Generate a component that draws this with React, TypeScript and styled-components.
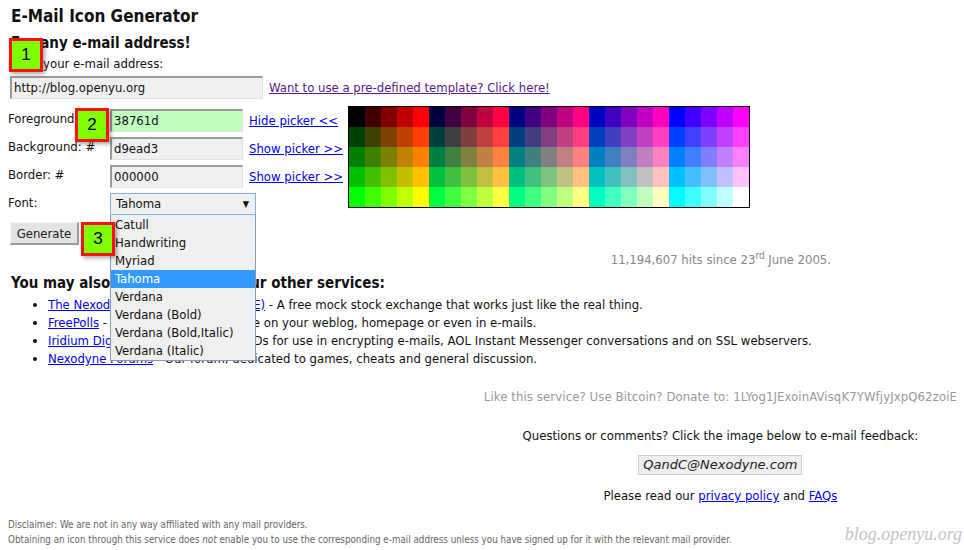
import React from "react";
import styled, { createGlobalStyle } from "styled-components";

const FONT = `"DejaVu Sans Condensed", "DejaVu Sans", sans-serif`;

const GlobalStyle = createGlobalStyle`
  html, body { margin: 0; padding: 0; background: #fff; }
  body { font-family: ${FONT}; font-size: 13px; color: #111; }
  * { box-sizing: border-box; }
`;

const Page = styled.div`
  position: relative;
  width: 964px;
  height: 550px;
  overflow: hidden;
  padding: 6px 7px 0 8px;
  display: flex;
  flex-direction: column;
`;

const Title = styled.h1`
  margin: 0 0 0 3px;
  font-size: 17px;
  line-height: 20px;
  font-weight: bold;
`;

const SubTitle = styled.h2<{ $top?: number }>`
  margin: ${(p) => p.$top ?? 7}px 0 0 3px;
  font-size: 15px;
  line-height: 20px;
  font-weight: bold;
`;

const Text = styled.div<{ $top?: number }>`
  margin-top: ${(p) => p.$top ?? 0}px;
  line-height: 18px;
`;

const Row = styled.div<{ $top?: number }>`
  display: flex;
  align-items: center;
  gap: 6px;
  margin: ${(p) => p.$top ?? 0}px 0 0 2px;
`;

const TextInput = styled.div<{ $w: number; $bg?: string }>`
  width: ${(p) => p.$w}px;
  height: 23px;
  line-height: 19px;
  padding: 0 2px;
  background: ${(p) => p.$bg ?? "#f0f0f0"};
  border-style: solid;
  border-width: 2px 1px 1px 2px;
  border-color: #9a9a9a #e2e2e2 #e2e2e2 #9a9a9a;
  font-size: 13px;
  color: #111;
  white-space: nowrap;
  overflow: hidden;
`;

const Link = styled.a<{ $visited?: boolean }>`
  color: ${(p) => (p.$visited ? "#551a8b" : "#0000ee")};
  text-decoration: underline;
  white-space: nowrap;
  cursor: pointer;
`;

const FormArea = styled.div`
  display: flex;
  align-items: flex-start;
  margin-top: 7px;
`;

const FormGrid = styled.div`
  display: grid;
  grid-template-columns: 102px 139px 99px;
  grid-auto-rows: 28px;
  align-items: center;
`;

const Label = styled.div`
  white-space: nowrap;
  line-height: 18px;
  margin-top: -2px;
`;

const SelectCell = styled.div`
  position: relative;
  grid-column: 2 / span 2;
  width: 146px;
`;

const SelectBox = styled.div`
  height: 22px;
  width: 146px;
  border: 1px solid #7eb4ea;
  background: #f0f0f0;
  display: flex;
  align-items: center;
  justify-content: space-between;
  padding: 0 6px 0 5px;
  line-height: 18px;
`;

const Arrow = styled.span`
  font-size: 9px;
  color: #111;
`;

const DropList = styled.ul`
  position: absolute;
  top: 100%;
  left: 0;
  width: 146px;
  margin: 0;
  padding: 1px 0 0;
  list-style: none;
  background: #f0f0f0;
  border: 1px solid #8a9bb8;
  border-top: none;
  z-index: 5;
`;

const DropItem = styled.li<{ $active?: boolean }>`
  height: 18px;
  line-height: 18px;
  padding-left: 4px;
  white-space: nowrap;
  background: ${(p) => (p.$active ? "#3399ff" : "transparent")};
  color: ${(p) => (p.$active ? "#fff" : "#111")};
`;

const ColorGrid = styled.div`
  display: grid;
  grid-template-columns: repeat(25, 16px);
  grid-auto-rows: 20px;
  border: 1px solid #000;
`;

const Swatch = styled.div<{ $c: string }>`
  background: ${(p) => p.$c};
`;

const Button = styled.div`
  margin-top: 4px;
  margin-left: 2px;
  width: 69px;
  height: 23px;
  background: #e3e3e3;
  border-style: solid;
  border-width: 1px 2px 2px 1px;
  border-color: #f4f4f4 #9a9a9a #9a9a9a #f4f4f4;
  display: flex;
  align-items: center;
  justify-content: center;
  color: #222;
`;

const Hits = styled.div`
  margin-top: 6px;
  padding-right: 126px;
  text-align: right;
  color: #888;
  line-height: 18px;
  sup { font-size: 10px; line-height: 0; }
`;

const ServiceList = styled.ul`
  margin: 3px 0 0;
  padding-left: 40px;
  line-height: 18px;
`;

const RightBlock = styled.div`
  align-self: flex-end;
  margin-top: 20px;
  text-align: center;
  display: flex;
  flex-direction: column;
  align-items: center;
`;

const Donate = styled.div`
  color: #999;
  line-height: 18px;
  letter-spacing: 0.1px;
  white-space: nowrap;
`;

const MailImage = styled.div`
  margin-top: 10px;
  width: 164px;
  height: 20px;
  background: #efefef;
  border: 1px solid #cfcfcf;
  font-family: "DejaVu Sans", sans-serif;
  font-style: italic;
  font-size: 13px;
  line-height: 18px;
  color: #222;
`;

const Disclaimer = styled.div`
  margin-top: 12px;
  font-size: 9.75px;
  line-height: 15px;
  color: #666;
`;

const Watermark = styled.div`
  position: absolute;
  right: 2px;
  bottom: 5px;
  font-family: "Liberation Serif", serif;
  font-style: italic;
  font-size: 18px;
  color: #c4c4c4;
`;

const Badge = styled.div<{ $x: number; $y: number }>`
  position: absolute;
  left: ${(p) => p.$x}px;
  top: ${(p) => p.$y}px;
  width: 34px;
  height: 34px;
  background: #80ff00;
  border: 3px solid #ff1010;
  box-shadow: 2px 2px 4px rgba(0, 0, 0, 0.35);
  display: flex;
  align-items: center;
  justify-content: center;
  font-family: "Liberation Sans", Arial, sans-serif;
  font-size: 17px;
  color: #000;
  z-index: 10;
`;

const LEVELS = ["00", "40", "80", "c0", "ff"];
const swatches: string[] = [];
for (let g = 0; g < 5; g++) {
  for (let b = 0; b < 5; b++) {
    for (let red = 0; red < 5; red++) {
      swatches.push(`#${LEVELS[red]}${LEVELS[g]}${LEVELS[b]}`);
    }
  }
}

const fonts = [
  "Catull",
  "Handwriting",
  "Myriad",
  "Tahoma",
  "Verdana",
  "Verdana (Bold)",
  "Verdana (Bold,Italic)",
  "Verdana (Italic)",
];

export default function App() {
  return (
    <>
      <GlobalStyle />
      <Page>
        <Title>E-Mail Icon Generator</Title>
        <SubTitle>For any e-mail address!</SubTitle>
        <Text $top={2}>Enter your e-mail address:</Text>
        <Row $top={3}>
          <TextInput $w={253}>http://blog.openyu.org</TextInput>
          <Link $visited>Want to use a pre-defined template? Click here!</Link>
        </Row>

        <FormArea>
          <FormGrid>
            <Label>Foreground: #</Label>
            <TextInput $w={133} $bg="#c0ffc0">38761d</TextInput>
            <Link>Hide picker &lt;&lt;</Link>

            <Label>Background: #</Label>
            <TextInput $w={133}>d9ead3</TextInput>
            <Link>Show picker &gt;&gt;</Link>

            <Label>Border: #</Label>
            <TextInput $w={133}>000000</TextInput>
            <Link>Show picker &gt;&gt;</Link>

            <Label>Font:</Label>
            <SelectCell>
              <SelectBox>
                <span>Tahoma</span>
                <Arrow>▼</Arrow>
              </SelectBox>
              <DropList>
                {fonts.map((f) => (
                  <DropItem key={f} $active={f === "Tahoma"}>
                    {f}
                  </DropItem>
                ))}
              </DropList>
            </SelectCell>
          </FormGrid>
          <ColorGrid>
            {swatches.map((c, i) => (
              <Swatch key={i} $c={c} />
            ))}
          </ColorGrid>
        </FormArea>

        <Button>Generate</Button>

        <Hits>
          11,194,607 hits since 23<sup>rd</sup> June 2005.
        </Hits>

        <SubTitle $top={4}>You may also be interested in our other services:</SubTitle>
        <ServiceList>
          <li>
            <Link>The Nexodyne Stock Exchange (NSE)</Link> - A free mock stock exchange that works just like the real thing.
          </li>
          <li>
            <Link>FreePolls</Link> - A free poll service for use on your weblog, homepage or even in e-mails.
          </li>
          <li>
            <Link>Iridium DigitalIDs</Link> - Get free DigitalIDs for use in encrypting e-mails, AOL Instant Messenger conversations and on SSL webservers.
          </li>
          <li>
            <Link>Nexodyne Forums</Link> - Our forum, dedicated to games, cheats and general discussion.
          </li>
        </ServiceList>

        <RightBlock>
          <Donate>Like this service? Use Bitcoin? Donate to: 1LYog1JExoinAVisqK7YWfjyJxpQ62zoiE</Donate>
          <Text $top={21}>Questions or comments? Click the image below to e-mail feedback:</Text>
          <MailImage>QandC@Nexodyne.com</MailImage>
          <Text $top={12}>
            Please read our <Link>privacy policy</Link> and <Link>FAQs</Link>
          </Text>
        </RightBlock>

        <Disclaimer>
          Disclaimer: We are not in any way affiliated with any mail providers.
          <br />
          Obtaining an icon through this service does <i>not</i> enable you to use the corresponding e-mail address unless you have signed up for it with the relevant mail provider.
        </Disclaimer>

        <Watermark>blog.openyu.org</Watermark>

        <Badge $x={9} $y={38}>1</Badge>
        <Badge $x={75} $y={108}>2</Badge>
        <Badge $x={81} $y={222}>3</Badge>
      </Page>
    </>
  );
}
